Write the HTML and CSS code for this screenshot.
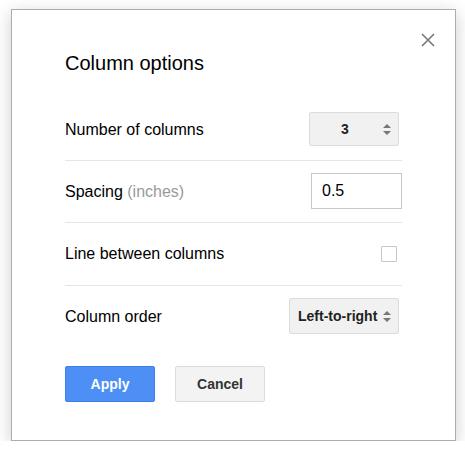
FILE: index.html
```html
<!DOCTYPE html>
<html>
<head>
<meta charset="utf-8">
<link rel="stylesheet" href="styles.css">
</head>
<body>
<div class="dialog">
  <button class="close" aria-label="Close">
    <svg width="14" height="14" viewBox="0 0 14 14"><path d="M1 1L13 13M13 1L1 13" stroke="#777" stroke-width="1.6" fill="none"/></svg>
  </button>
  <div class="title">Column options</div>
  <div class="row">
    <span class="label">Number of columns</span>
    <div class="select num"><span class="val">3</span><span class="arrows"></span></div>
  </div>
  <div class="row">
    <span class="label">Spacing <span class="muted">(inches)</span></span>
    <div class="input">0.5</div>
  </div>
  <div class="row tall">
    <span class="label">Line between columns</span>
    <div class="checkbox"></div>
  </div>
  <div class="row last">
    <span class="label">Column order</span>
    <div class="select order"><span class="val">Left-to-right</span><span class="arrows"></span></div>
  </div>
  <div class="buttons">
    <button class="btn primary">Apply</button>
    <button class="btn">Cancel</button>
  </div>
</div>
</body>
</html>
```
FILE: styles.css
```css
html, body {
  margin: 0;
  padding: 0;
  background: #fff;
  font-family: "Liberation Sans", Arial, sans-serif;
}
.dialog {
  position: relative;
  margin: 9px 0 0 11px;
  width: 445px;
  height: 432px;
  box-sizing: border-box;
  border: 1px solid #acacac;
  background: #fff;
  box-shadow: 0 4px 16px rgba(0,0,0,0.2);
  padding: 42px 53px 0 53px;
}
.close {
  position: absolute;
  top: 23px;
  right: 20px;
  width: 14px;
  height: 14px;
  padding: 0;
  border: 0;
  background: none;
  display: block;
}
.close svg { display: block; }
.title {
  font-size: 20px;
  line-height: 23px;
  color: #000;
  margin-bottom: 24px;
}
.row {
  height: 62px;
  box-sizing: border-box;
  border-bottom: 1px solid #e5e5e5;
  display: flex;
  align-items: center;
  justify-content: space-between;
}
.row.tall { height: 63px; }
.row.last { border-bottom: 0; height: 62px; }
.label {
  font-size: 16px;
  color: #000;
}
.muted { color: #999; }
.select {
  box-sizing: border-box;
  height: 34px;
  background: #f1f1f1;
  border: 1px solid #dcdcdc;
  border-radius: 2px;
  display: flex;
  align-items: center;
  font-size: 14px;
  font-weight: bold;
  color: #222;
  position: relative;
  margin-bottom: 2px;
}
.select.num {
  width: 90px;
  margin-right: 3px;
  justify-content: center;
  padding-right: 18px;
}
.select.order {
  width: 110px;
  height: 36px;
  margin-right: 3px;
  padding-left: 8px;
}
.arrows {
  position: absolute;
  right: 7px;
  top: 50%;
  width: 8px;
  height: 11px;
  margin-top: -5px;
}
.arrows::before, .arrows::after {
  content: "";
  position: absolute;
  left: 0;
  border-left: 4px solid transparent;
  border-right: 4px solid transparent;
}
.arrows::before { top: 0; border-bottom: 4px solid #777; }
.arrows::after { bottom: 0; border-top: 4px solid #777; }
.input {
  box-sizing: border-box;
  width: 91px;
  height: 36px;
  border: 1px solid #c8c8c8;
  font-size: 16px;
  color: #000;
  padding-left: 10px;
  line-height: 34px;
  margin-bottom: 2px;
}
.checkbox {
  box-sizing: border-box;
  width: 16px;
  height: 16px;
  border: 1px solid #c6c6c6;
  border-radius: 1px;
  margin-right: 5px;
}
.buttons {
  display: flex;
  gap: 20px;
  margin-top: 18px;
}
.btn {
  box-sizing: border-box;
  width: 90px;
  height: 36px;
  border: 1px solid #dcdcdc;
  border-radius: 2px;
  background: #f3f3f3;
  color: #333;
  font-family: "Liberation Sans", Arial, sans-serif;
  font-size: 14px;
  font-weight: bold;
  padding: 0;
}
.btn.primary {
  background: #4d8ff5;
  border-color: #3c7fe8;
  color: #fff;
}
```
